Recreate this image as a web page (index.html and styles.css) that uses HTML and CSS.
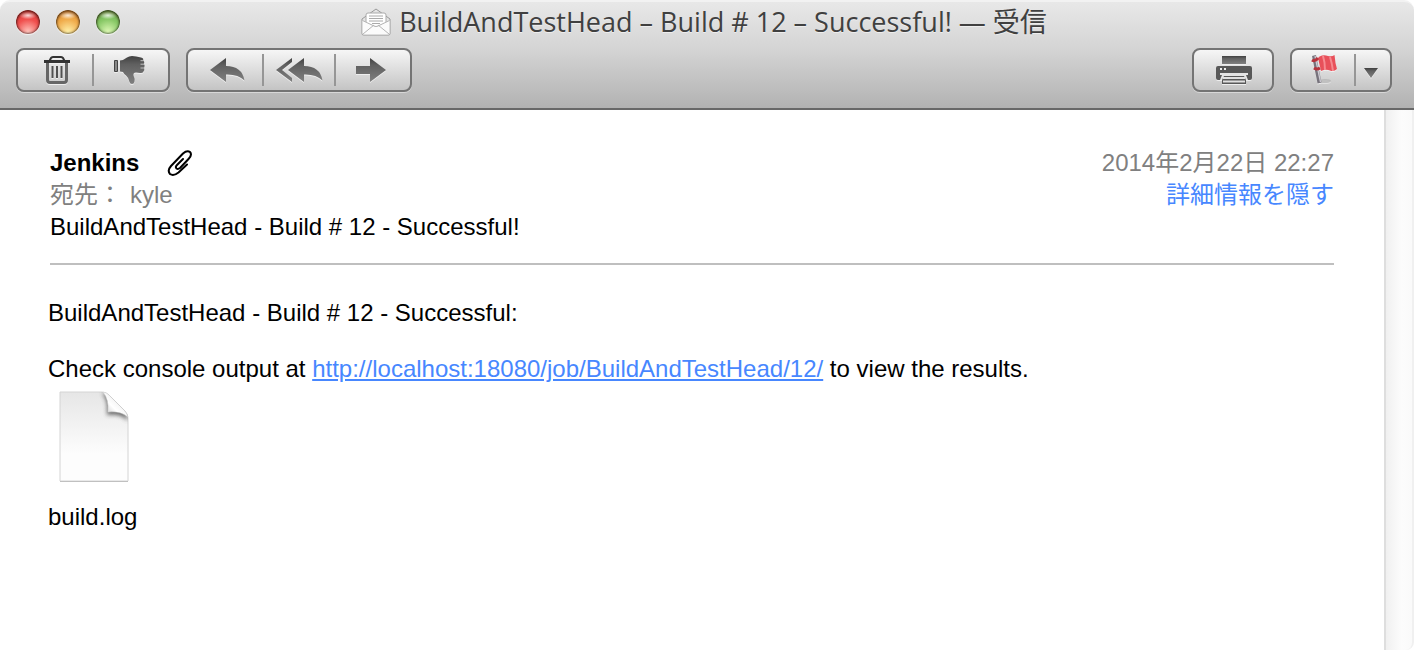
FILE: index.html
```html
<!DOCTYPE html>
<html lang="ja">
<head>
  <meta charset="UTF-8" />
  <meta name="viewport" content="width=device-width, initial-scale=1.0" />
  <title>BuildAndTestHead - Build # 12 - Successful! — 受信</title>
  <link rel="stylesheet" href="styles.css">
</head>
<body>
  <header class="chrome">
    <div class="titlebar">
      <div class="lights">
        <button class="light red" aria-label="閉じる"></button>
        <button class="light yellow" aria-label="しまう"></button>
        <button class="light green" aria-label="拡大"></button>
      </div>
      <h1 class="title">
        <svg width="30" height="28" viewBox="0 0 30 28" aria-hidden="true">
          <path d="M1 11L15 1l14 10v14.500q0 1.500-1.500 1.500h-25Q1 27 1 25.500z" fill="#e4e4e4" stroke="#999"/>
          <path d="M5 15V7q0-2 2-2h16q2 0 2 2v8l-10 4z" fill="#fff" stroke="#aaa"/>
          <path d="M8 8h14M8 10.500h14M8 13h14M11 15.500h8" stroke="#aaa"/>
          <path d="M1.500 12.500L15 19l13.500-6.500V25q0 1.500-1.500 1.500H3Q1.500 26.500 1.500 25z" fill="#fbfbfb"/>
          <path d="M1.500 12.500L13 18q2 1 4 0l11.500-5.500M2 26l11-9M28 26l-11-9" fill="none" stroke="#b5b5b5"/>
        </svg>
        <span>BuildAndTestHead – Build # 12 – Successful! — 受信</span>
      </h1>
    </div>

    <div class="toolbar">
      <svg width="0" height="0" class="defs" aria-hidden="true">
        <linearGradient id="ink" x1="0" y1="0" x2="0" y2="1">
          <stop offset="0" stop-color="#404040"/>
          <stop offset=".3" stop-color="#606060"/>
          <stop offset="1" stop-color="#808080"/>
        </linearGradient>
      </svg>
      <div class="group">
        <button class="tool" aria-label="削除">
          <svg width="74" height="40" viewBox="0 0 74 40">
            <path d="M31.500 11L33 8q.5-1 2-1h8q1.500 0 2 1l1.500 3" fill="none" stroke="#333" stroke-width="2"/>
            <path d="M26 10h26v3H26z" fill="#333"/>
            <path d="M29.500 13v17q0 2.500 2.500 2.500h14q2.500 0 2.500-2.500V13" fill="none" stroke="#666" stroke-width="3"/>
            <path d="M34.500 16v12M39 16v12M43.500 16v12" stroke="#505050" stroke-width="2"/>
          </svg>
        </button>
        <button class="tool" aria-label="迷惑メール">
          <svg width="74" height="40" viewBox="0 0 74 40">
            <path d="M20.500 10.500h3v11h-3z" fill="#888" stroke="#444"/>
            <path d="M26 10.500q4-.5 7-3 2-1.500 5-1.500 4 0 9 1.500 3 .5 2 3 2 1 .8 3.500 1.700 1.500.2 4 1 2-.5 3.500-1 2-3.500 1.500-2-.5-4-.5-3 0-2.500 3 1.500 3 1 6-.5 2.500-2.500 2.500-2 0-2.500-2-.5-4-3.500-6.500-2-1.500-3-3.500-1.500-.5-3-.5z" fill="url(#ink)"/>
            <path d="M46.500 10.700h3.500M46.500 14.200h4M46.500 18h4" stroke="#c0c0c0"/>
          </svg>
        </button>
      </div>
      <div class="group">
        <button class="tool" aria-label="返信">
          <svg width="74" height="40" viewBox="0 0 74 40">
            <path d="M22 20L38 8v8q16 0 18.500 14.500Q50 24 38 24.500V32z" fill="url(#ink)"/>
          </svg>
        </button>
        <button class="tool" aria-label="全員に返信">
          <svg width="70" height="40" viewBox="0 0 70 40">
            <path d="M12 20L28 8v4L18 20l10 8v4z" fill="url(#ink)"/>
            <path d="M24 20L40 8v8q16 0 18.500 14.500Q52 24 40 24.500V32z" fill="url(#ink)"/>
          </svg>
        </button>
        <button class="tool" aria-label="転送">
          <svg width="74" height="40" viewBox="0 0 74 40">
            <path d="M20 16h14V8l16 12-16 12v-8H20z" fill="url(#ink)"/>
          </svg>
        </button>
      </div>
      <div class="group push">
        <button class="tool" aria-label="プリント">
          <svg width="78" height="40" viewBox="0 0 78 40">
            <path d="M28 6h24v8H28z" fill="url(#ink)"/>
            <path d="M24 16h32q2 0 2 2v10q0 2-2 2h-4v4H28v-4h-4q-2 0-2-2V18q0-2 2-2z" fill="#585858"/>
            <path d="M26 23h28v2h-2l2 5h-2l-2-4H30l-2 4h-2l2-5h-2z" fill="#e4e4e4"/>
            <path d="M29 28h22M29 31.500h22" stroke="#e0e0e0" stroke-width="2"/>
            <path d="M26 18h2v2h-2zM30 18h2v2h-2z" fill="#eee"/>
          </svg>
        </button>
      </div>
      <div class="group">
        <button class="tool" aria-label="フラグ">
          <svg width="62" height="40" viewBox="0 0 62 40">
            <ellipse cx="33" cy="31" rx="6" ry="2" fill="#aaa" opacity=".6"/>
            <path d="M22 5.500L27.500 33" stroke="#77737c" stroke-width="4"/>
            <path d="M23 6L28.500 32" stroke="#cfccd4" stroke-width="1.300"/>
            <path d="M26 8q1-2 4-2.500 3-.5 6 .5 4 1 6.500-1l1 8 1.500 6q-3 3-7 1.500-4-1.500-9 .5z" fill="#e8505a"/>
            <path d="M31 6q2 6 2 14M38 7q2 6 3 14" fill="none" stroke="#f68a90" stroke-width="2"/>
            <path d="M20 10q3 2 6-2M22 18q3 2 6 0" fill="none" stroke="#b5333c" stroke-width="3"/>
          </svg>
        </button>
        <button class="tool" aria-label="フラグの種類" aria-haspopup="menu">
          <svg width="34" height="40" viewBox="0 0 34 40">
            <path d="M8 18h14l-7 10z" fill="url(#ink)"/>
          </svg>
        </button>
      </div>
    </div>
  </header>

  <div class="content">
    <main class="message">
      <div class="headers">
        <div class="row">
          <div class="sender">
            <strong>Jenkins</strong>
            <svg width="26" height="28" viewBox="0 0 26 28" role="img" aria-label="添付ファイル">
              <path d="M20 15.500l-8.500 8q-5 4-8.500 1.500-3-3.500 1-8L16 4.500q4-3.500 7-1.500 2.500 3-1.500 7L13 19q-2 1.500-3.500.5-1.500-1.500.5-3.500l6-6" fill="none" stroke="#000" stroke-width="2" stroke-linecap="round" stroke-linejoin="round"/>
            </svg>
          </div>
          <time class="muted" datetime="2014-02-22T22:27">2014年2月22日 22:27</time>
        </div>
        <div class="row">
          <div class="recipient muted"><span>宛先：</span><span>kyle</span></div>
          <a class="details" href="#details">詳細情報を隠す</a>
        </div>
        <div>BuildAndTestHead - Build # 12 - Successful!</div>
      </div>
      <div class="body">
        <p>BuildAndTestHead - Build # 12 - Successful:</p>
        <p>Check console output at <a href="http://localhost:18080/job/BuildAndTestHead/12/">http://localhost:18080/job/BuildAndTestHead/12/</a> to view the results.</p>
        <figure class="attachment">
          <svg width="72" height="94" viewBox="0 0 72 94" aria-hidden="true">
            <defs>
              <linearGradient id="paper" x1="0" y1="0" x2="0" y2="1">
                <stop offset="0" stop-color="#e6e6e6"/>
                <stop offset=".7" stop-color="#fdfdfd"/>
              </linearGradient>
              <linearGradient id="curl" x1="0" y1="1" x2="1" y2="0">
                <stop offset="0" stop-color="#bbb"/>
                <stop offset=".4" stop-color="#fff"/>
                <stop offset="1" stop-color="#ddd"/>
              </linearGradient>
              <filter id="soft" x="-40%" y="-40%" width="180%" height="180%">
                <feGaussianBlur stdDeviation="2"/>
              </filter>
              <clipPath id="sheet"><path d="M2 1h42q4 0 7 3l15 15q4 4 4 8v63H2z"/></clipPath>
            </defs>
            <path d="M2 3h42l26 25v63H2z" fill="#777" opacity=".6"/>
            <path d="M2 1h42q4 0 7 3l15 15q4 4 4 8v63H2z" fill="url(#paper)" stroke="#d4d4d4"/>
            <path d="M44 2q7 7 5 22 14-2 21 6l-2-10L50 3z" fill="#444" opacity=".8" filter="url(#soft)" clip-path="url(#sheet)"/>
            <path d="M45 1q6 7 5 20 13-1 20 5-1-4-4-7L51 4q-3-3-6-3z" fill="url(#curl)" stroke="#ccc" stroke-width=".5"/>
          </svg>
          <figcaption>build.log</figcaption>
        </figure>
      </div>
    </main>
    <div class="scrollbar"></div>
  </div>
</body>
</html>
```
FILE: styles.css
```css
:root {
  --muted: #808080;
  --link: #4787ff;
  --edge: #747474;
}

* {
  box-sizing: border-box;
}

body {
  margin: 0;
  min-height: 100vh;
  display: flex;
  flex-direction: column;
  background: #fff;
  color: #000;
  font-family: "Liberation Sans", "Noto Sans CJK JP", sans-serif;
  font-size: 24px;
}

svg {
  display: block;
  flex: none;
}

button {
  padding: 0;
  border: none;
  background: none;
}

.chrome {
  padding-bottom: 16px;
  background: linear-gradient(#e8e8e8, #d4d4d4 45%, #b2b2b2);
  border-top: 2px solid #f2f2f2;
  border-bottom: 2px solid #686868;
  border-radius: 10px 10px 0 0;
}

/* title bar */
.titlebar {
  display: grid;
  grid-template-columns: 1fr auto 1fr;
  align-items: center;
  height: 40px;
  padding: 0 22px 0 16px;
}

.lights {
  display: flex;
  gap: 16px;
}

.light {
  width: 24px;
  height: 24px;
  border-radius: 50%;
  box-shadow: inset 0 0 2px 1px rgba(0, 0, 0, 0.5), inset 0 3px 3px rgba(70, 20, 0, 0.35), 0 1px 1px #f4f4f4;
}

.red    { background: radial-gradient(ellipse 9px 4px at 50% 22%, rgba(255, 255, 255, 0.8), transparent), radial-gradient(circle at 50% 90%, #ffc4bc, #f0504e 50%, #dc3338); }
.yellow { background: radial-gradient(ellipse 9px 4px at 50% 22%, rgba(255, 255, 255, 0.8), transparent), radial-gradient(circle at 50% 90%, #fff0a8, #f0ac4c 50%, #dd8b2c); }
.green  { background: radial-gradient(ellipse 9px 4px at 50% 22%, rgba(255, 255, 255, 0.8), transparent), radial-gradient(circle at 50% 90%, #dcf8b4, #88c866 50%, #5da647); }

.title {
  display: flex;
  align-items: center;
  gap: 8px;
  margin: 0;
  color: #404040;
  font-family: "Open Sans", "Noto Sans CJK JP", sans-serif;
  font-size: 27px;
  font-weight: 400;
  line-height: 32px;
  text-shadow: 0 1px 0 #eee;
}

/* toolbar */
.toolbar {
  display: flex;
  gap: 16px;
  margin-top: 6px;
  padding: 0 22px 0 16px;
}

.defs {
  position: absolute;
}

.group {
  display: flex;
  border: 2px solid var(--edge);
  border-radius: 8px;
  background: linear-gradient(#f6f6f6, #c4c4c4);
  box-shadow: 0 1px 0 #d8d8d8;
}

.push {
  margin-left: auto;
}

.tool + .tool {
  border-left: 2px solid transparent;
  background: linear-gradient(#969696, #969696) left center / 2px 32px no-repeat border-box;
}

.tool svg {
  filter: drop-shadow(0 1px 0 #eee);
}

/* message */
.content {
  display: flex;
  flex: 1;
}

.message {
  flex: 1;
  padding: 37px 50px 40px 48px;
}

.headers {
  margin-left: 2px;
  padding-bottom: 20px;
  border-bottom: 2px solid #bfbfbf;
  line-height: 32px;
}

.row {
  display: flex;
  justify-content: space-between;
  height: 32px;
}

.sender {
  display: flex;
  align-items: center;
  gap: 28px;
}

.recipient {
  display: flex;
  gap: 8px;
}

.muted {
  color: var(--muted);
}

a {
  color: var(--link);
}

.details {
  text-decoration: none;
}

.body {
  padding-top: 34px;
  line-height: 28px;
}

.body p {
  margin: 0 0 28px;
}

.body p a {
  text-decoration-thickness: 2px;
  text-underline-offset: 2px;
}

.body .attachment {
  margin: -20px 0 0;
}

.attachment svg {
  margin: 0 0 18px 10px;
}

.scrollbar {
  width: 30px;
  border-left: 2px solid #dedede;
  border-right: 2px solid #f0f0f0;
  border-bottom-right-radius: 8px;
  background: linear-gradient(90deg, #f0f0f0, #fcfcfc 60%, #fafafa);
}
```
